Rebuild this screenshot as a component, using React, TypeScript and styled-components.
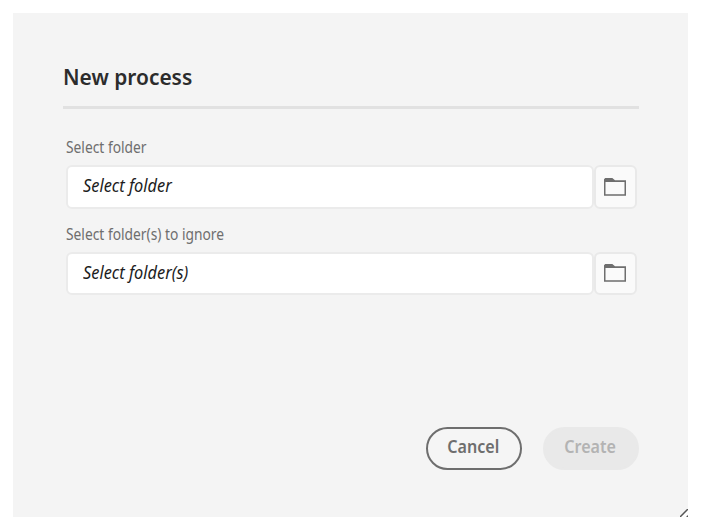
import React from "react";
import styled, { createGlobalStyle } from "styled-components";

const GlobalStyle = createGlobalStyle`
  *, *::before, *::after { box-sizing: border-box; }
  body { margin: 0; background: #fff; font-family: "Noto Sans", "Open Sans", sans-serif; }
`;

const Page = styled.main`
  padding: 13px;
  height: 530px;
`;

const Dialog = styled.section`
  position: relative;
  display: flex;
  flex-direction: column;
  width: 675px;
  height: 504px;
  padding: 49px 49.5px 47.5px 49.5px;
  background: #f4f4f4;
`;

const Text = styled.span<{ $stretch: number }>`
  display: inline-block;
  white-space: nowrap;
  transform: scaleX(${(p) => p.$stretch});
  transform-origin: left center;
`;

const CenteredText = styled(Text)`
  transform-origin: center;
`;

const Title = styled.h1`
  margin: 0;
  height: 47px;
  border-bottom: 3px solid #e1e1e1;
  color: #2c2c2c;
  font-size: 21.5px;
  font-weight: 600;
  line-height: 29px;
`;

const Form = styled.form`
  display: flex;
  flex-direction: column;
  flex: 1;
  gap: 15px;
  padding: 28px 2px 0 3px;
`;

const Field = styled.div`
  display: flex;
  flex-direction: column;
`;

const Label = styled.label`
  height: 28px;
  color: #6e6e6e;
  font-size: 15.5px;
  line-height: 21px;
`;

const InputRow = styled.div`
  display: grid;
  grid-template-columns: 528px 43px;
  height: 43.5px;
`;

const Input = styled.div`
  padding: 0 0 0 15px;
  border: 2px solid #ebebeb;
  border-radius: 6px;
  background: #fff;
  color: #1c1c1c;
  font-size: 17.5px;
  font-style: italic;
  line-height: 36px;
`;

const BrowseButton = styled.button`
  display: flex;
  align-items: center;
  justify-content: center;
  padding: 0 1px 0 0;
  border: 2px solid #e9e9e9;
  border-radius: 6px;
  background: #fafafa;
`;

const Actions = styled.footer`
  display: flex;
  justify-content: flex-end;
  gap: 21px;
`;

const PillButton = styled.button<{ $muted?: boolean }>`
  width: 96px;
  height: 43px;
  padding: 0 0 4px;
  border: 2px solid ${(p) => (p.$muted ? "#e9e9e9" : "#6e6e6e")};
  border-radius: 22px;
  background: ${(p) => (p.$muted ? "#e9e9e9" : "#f5f5f5")};
  color: ${(p) => (p.$muted ? "#b3b3b3" : "#6e6e6e")};
  font-family: inherit;
  font-size: 17.5px;
  font-weight: 600;
`;

const ResizeGrip = styled.svg`
  position: absolute;
  right: 0;
  bottom: 0;
`;

const FolderIcon = () => (
  <svg width="22" height="18" viewBox="0 0 22 18" fill="none">
    <path d="M0 17.8V1.2L1.2 0H8.3L11 2.3H22V17.8Z M1.5 4V16.3H20.5V4Z" fill="#6e6e6e" fillRule="evenodd" />
  </svg>
);

interface FolderFieldProps {
  label: string;
  value: string;
}

const FolderField = ({ label, value }: FolderFieldProps) => (
  <Field>
    <Label><Text $stretch={0.89}>{label}</Text></Label>
    <InputRow>
      <Input><Text $stretch={0.935}>{value}</Text></Input>
      <BrowseButton type="button" aria-label={label}><FolderIcon /></BrowseButton>
    </InputRow>
  </Field>
);

export default function App() {
  return (
    <Page>
      <GlobalStyle />
      <Dialog>
        <Title><Text $stretch={0.973}>New process</Text></Title>
        <Form>
          <FolderField label="Select folder" value="Select folder" />
          <FolderField label="Select folder(s) to ignore" value="Select folder(s)" />
        </Form>
        <Actions>
          <PillButton><CenteredText $stretch={0.92}>Cancel</CenteredText></PillButton>
          <PillButton $muted><CenteredText $stretch={0.92}>Create</CenteredText></PillButton>
        </Actions>
        <ResizeGrip width="8" height="8" viewBox="0 0 8 8">
          <path d="M0 8L8 0V8Z" fill="#fff" />
          <path d="M0 8L8 0M6.8 8L8 6.8" stroke="#555" strokeWidth="1.5" />
        </ResizeGrip>
      </Dialog>
    </Page>
  );
}
